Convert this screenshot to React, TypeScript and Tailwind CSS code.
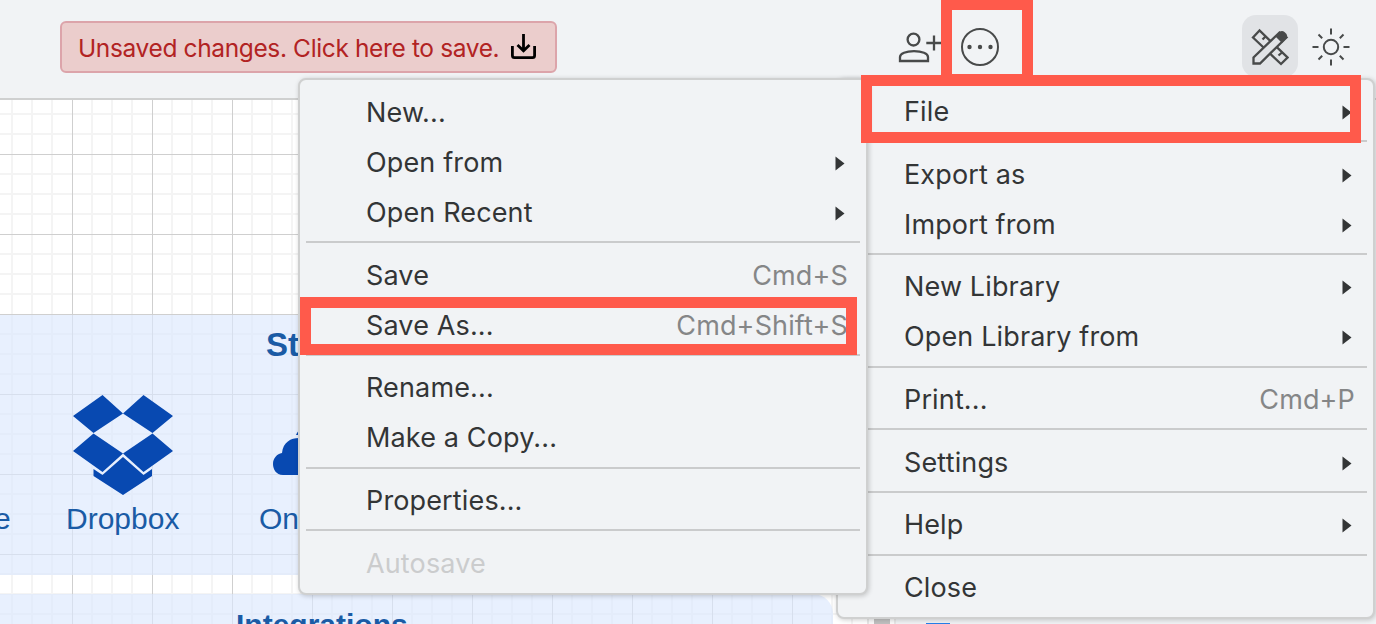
import React from "react";

type Item = { label: string; keys?: string; arrow?: boolean; disabled?: boolean };

const fileMenu: Item[][] = [
  [{ label: "New..." }, { label: "Open from", arrow: true }, { label: "Open Recent", arrow: true }],
  [{ label: "Save", keys: "Cmd+S" }, { label: "Save As...", keys: "Cmd+Shift+S" }],
  [{ label: "Rename..." }, { label: "Make a Copy..." }],
  [{ label: "Properties..." }],
  [{ label: "Autosave", disabled: true }],
];

const mainMenu: Item[][] = [
  [{ label: "File", arrow: true }],
  [{ label: "Export as", arrow: true }, { label: "Import from", arrow: true }],
  [{ label: "New Library", arrow: true }, { label: "Open Library from", arrow: true }],
  [{ label: "Print...", keys: "Cmd+P" }],
  [{ label: "Settings", arrow: true }],
  [{ label: "Help", arrow: true }],
  [{ label: "Close" }],
];

function Arrow() {
  return (
    <svg width="10" height="15" viewBox="0 0 10 15" className="mr-[3px] shrink-0">
      <path d="M0.500 0.500L9.500 7.500L0.500 14.500Z" fill="#333536" />
    </svg>
  );
}

function Menu({ groups, className }: { groups: Item[][]; className: string }) {
  return (
    <div
      className={
        "absolute flex flex-col rounded-lg border-2 border-[#cfd0d0] bg-[#f1f3f5] px-1.5 text-[27px] tracking-[0.14px] shadow-[1px_1px_5px_rgba(0,0,0,0.2)] " +
        className
      }
    >
      {groups.map((group, i) => (
        <div key={i} className="flex flex-col">
          {i > 0 && <div className="mt-1 mb-[6.67px] h-[2px] shrink-0 bg-[#cacbcc]" />}
          {group.map((item) => (
            <div
              key={item.label}
              className={
                "flex h-[50px] items-center justify-between pt-[2px] pr-[12px] pl-[60px] whitespace-nowrap " +
                (item.disabled ? "text-[#cbcccd]" : "text-[#333536]")
              }
            >
              <span>{item.label}</span>
              {item.keys && <span className="text-[#858687]">{item.keys}</span>}
              {item.arrow && <Arrow />}
            </div>
          ))}
        </div>
      ))}
    </div>
  );
}

function Grid() {
  return (
    <svg className="absolute inset-0 h-full w-full">
      <defs>
        <pattern id="grid" x="-8" y="-26" width="80" height="80" patternUnits="userSpaceOnUse">
          <path d="M20 0V80M40 0V80M60 0V80M0 20H80M0 40H80M0 60H80" stroke="#f4f4f4" strokeWidth="2" />
          <path d="M0.5 0V80M0 0.5H80" stroke="#cfcfcf" />
        </pattern>
      </defs>
      <rect width="100%" height="100%" fill="url(#grid)" />
    </svg>
  );
}

function Canvas() {
  return (
    <div className="relative w-[867px] shrink-0 overflow-hidden bg-white font-['Liberation_Sans',sans-serif] text-[#1a5ba5]">
      <Grid />
      <div className="absolute top-[215px] left-[-20px] h-[260px] w-[860px] bg-[#dbe8fd]/65" />
      <div className="absolute top-[494px] left-[-20px] h-[100px] w-[853px] rounded-tr-[20px] bg-[#dbe8fd]/65" />
      <span className="absolute top-[225px] left-[266px] text-[33px] leading-[40px] font-bold">Storage</span>
      <span className="absolute top-[399px] left-[-6px] text-[30px] leading-[40px]">e</span>
      <span className="absolute top-[399px] left-[66px] text-[30px] leading-[40px]">Dropbox</span>
      <span className="absolute top-[399px] left-[259px] text-[30px] leading-[40px]">OneDrive</span>
      <span className="absolute top-[505px] left-[236px] text-[30px] leading-[40px] font-bold">Integrations</span>
      <svg className="absolute top-[295px] left-[73px]" width="100" height="100" viewBox="0 0 100 100" fill="#0849b1">
        <path d="M29.500 0L50 18.500L20.500 38L0 21ZM70.500 0L50 18.500L79.500 38L100 21ZM20.500 38.500L50 58.500L29.500 77L0 56ZM79.500 38.500L50 58.500L70.500 77L100 56Z" />
        <path d="M50 62L70.500 80L79 74V81L50 100L20.500 81V74L29.500 80Z" />
      </svg>
      <svg className="absolute top-[328px] left-[273px]" width="80" height="48" viewBox="0 0 80 48" fill="#0849b1">
        <path d="M10 47C3 47 0 41 0 36C0 30 4 26 9 25C10 14 18 10 26 10C34 10 40 15 42 20L70 30V47Z" />
        <path d="M23 7C25 2 29 0 35 0V7Z" />
      </svg>
    </div>
  );
}

const iconStroke = "#484a4a";

function Header() {
  return (
    <header className="flex h-[100px] shrink-0 items-start border-b-2 border-[#cfd0d0] pl-[60px]">
      <div className="mt-[21px] flex h-[52px] w-[497px] items-center rounded-md border-2 border-[#dca4aa] bg-[#ebcdcc] pl-4 text-[24.5px] whitespace-nowrap text-[#b22323]">
        <span className="w-[421px] pt-[2px] tracking-[-0.37px]">Unsaved changes. Click here to save.</span>
        <svg width="26" height="26" viewBox="0 0 26 26" fill="none" stroke="#000" strokeWidth="2.800" className="ml-[11px]">
          <path d="M2.400 12V21.500Q2.400 23.600 4.500 23.600H22.500Q24.600 23.600 24.600 21.500V12M13.500 0V16M7.500 11L13.500 16.800L19.500 11" />
        </svg>
      </div>
      <svg className="mt-[30px] ml-[341px]" width="44" height="34" viewBox="0 0 44 34" fill="none" stroke={iconStroke} strokeWidth="2.300">
        <circle cx="15.500" cy="9.600" r="5.900" />
        <path d="M2 31V27C2 23.500 8 21.200 16 21.200S30 23.500 30 27V31ZM36 5.500V20.500M28.300 13H43.500" />
      </svg>
      <svg className="mt-[27px] ml-[18px]" width="40" height="40" viewBox="0 0 40 40" fill="none" stroke={iconStroke} strokeWidth="2">
        <circle cx="20" cy="20" r="18" />
        <g fill={iconStroke} stroke="none">
          <circle cx="9.500" cy="20" r="2.200" />
          <circle cx="20" cy="20" r="2.200" />
          <circle cx="30.500" cy="20" r="2.200" />
        </g>
      </svg>
      <div className="mt-[15px] ml-[242px] flex h-[62px] w-[56px] justify-center rounded-[14px] bg-[#e1e3e6] pt-[13px]">
        <svg width="38" height="38" viewBox="0 0 38 38" fill="none" stroke={iconStroke} strokeWidth="2.300">
          <path d="M8.500 2.500L2 9.500L30 36L36.500 29.500ZM15 8L11.500 11.500M31.500 24L27.500 27.500" />
          <path d="M28.500 4.500L2.500 29.500V35.500H9L35.500 9.500Z" fill="#e1e3e6" />
          <path d="M24.500 8.500L28.500 4Q31 2 33.500 4L35.500 6Q37 8.500 35.500 10L31 15Z" fill={iconStroke} stroke="none" />
        </svg>
      </div>
      <svg className="mt-[28px] ml-[14px]" width="38" height="38" viewBox="0 0 38 38" fill="none" stroke={iconStroke} strokeWidth="2">
        <circle cx="19" cy="19" r="7.200" />
        <path d="M19 .500V6.500M19 31.500V37.500M.500 19H6.500M31.500 19H37.500M6.500 6.500L10.200 10.200M27.800 27.800L31.500 31.500M6.500 31.500L10.200 27.800M27.800 10.200L31.500 6.500" />
      </svg>
    </header>
  );
}

export default function App() {
  return (
    <div className="relative flex h-[624px] w-[1376px] flex-col overflow-hidden bg-[#f1f3f5] font-[Inter,sans-serif]">
      <Header />
      <main className="flex flex-1">
        <Canvas />
        <div className="flex w-[29px] shrink-0 justify-center border-x-2 border-[#e7e7e7] bg-[#fafafa]">
          <div className="w-4 bg-[#c1c1c1]" />
        </div>
        <aside className="flex flex-1 items-end pl-[30px]">
          <div className="h-px w-6 bg-[#2680eb]" />
        </aside>
      </main>
      <Menu groups={mainMenu} className="top-[78px] left-[836px] h-[541px] w-[539px] pt-[6.4px]" />
      <Menu groups={fileMenu} className="top-[78px] left-[298px] h-[517px] w-[570px] pt-[7.2px]" />
      <div className="absolute top-[-1px] left-[941px] h-[86px] w-[92px] border-[11px] border-[#ff5a4b]" />
      <div className="absolute top-[75px] left-[861px] h-[68px] w-[500px] border-[11px] border-[#ff5a4b]" />
      <div className="absolute top-[297px] left-[300px] h-[58px] w-[557px] border-[11px] border-[#ff5a4b]" />
    </div>
  );
}
